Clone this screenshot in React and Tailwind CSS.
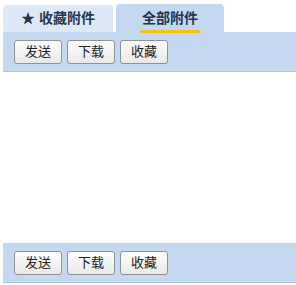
export default function App() {
  const font = { fontFamily: '"Liberation Sans", "Noto Sans CJK SC", sans-serif' };
  const Btn = ({ children }) => (
    <button className="w-[48px] h-[24px] rounded-[3px] border border-[#8f9396] bg-gradient-to-b from-[#fdfdfd] to-[#e9e9e9] text-[13px] text-[#222] flex items-center justify-center">
      {children}
    </button>
  );
  const Bar = () => (
    <div className="h-[40px] bg-[#c4d8ef] border-b border-[#b3c3d3] flex items-center gap-[5px] pl-[11px]">
      <Btn>发送</Btn>
      <Btn>下载</Btn>
      <Btn>收藏</Btn>
    </div>
  );
  return (
    <div className="w-[296px] h-[285px] bg-white flex flex-col pl-[3px]" style={font}>
      <div className="flex items-end gap-[3px] pt-[4px] h-[32px]">
        <div className="w-[110px] h-[27px] rounded-t-[4px] bg-[#dde9f6] flex items-center justify-center text-[14px] font-bold text-[#26384f]">
          ★ 收藏附件
        </div>
        <div className="w-[108px] h-[28px] rounded-t-[4px] bg-[#c4d8ef] flex flex-col items-center justify-center text-[14px] font-bold text-[#1c3456]">
          <span className="relative pt-[1px]">
            全部附件
            <span className="absolute left-[-2px] right-[-2px] bottom-[-4px] h-[3px] rounded-full bg-[#f2c414]"></span>
          </span>
        </div>
      </div>
      <Bar />
      <div className="h-[171px]"></div>
      <Bar />
    </div>
  );
}
